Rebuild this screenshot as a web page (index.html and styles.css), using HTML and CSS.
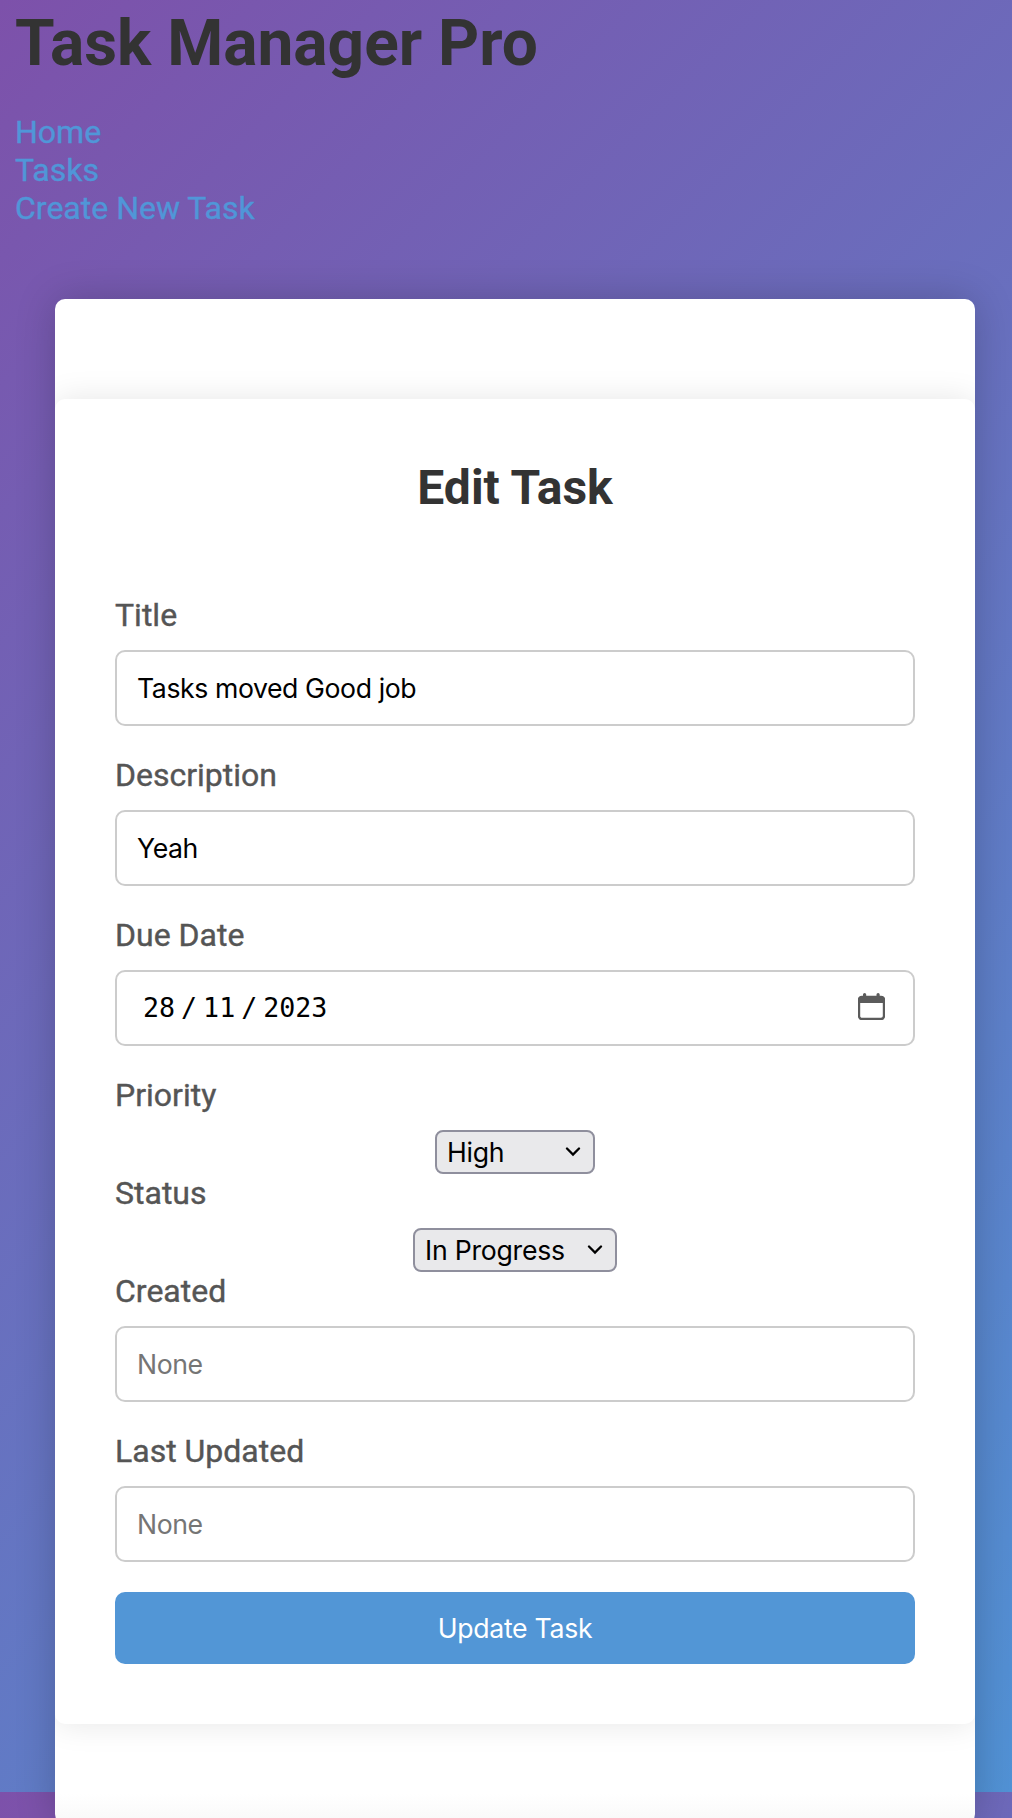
FILE: index.html
```html
<!DOCTYPE html>
<html lang="en">
<head>
<meta charset="utf-8">
<title>Task Manager Pro</title>
<link rel="stylesheet" href="styles.css">
</head>
<body>
<header class="site-header">
  <h1 class="brand">Task Manager Pro</h1>
  <nav class="nav">
    <a href="#">Home</a>
    <a href="#">Tasks</a>
    <a href="#">Create New Task</a>
  </nav>
</header>
<main class="container">
  <form class="task-form">
    <h2 class="form-title">Edit Task</h2>
    <label class="label" for="title">Title</label>
    <input class="field" id="title" type="text" value="Tasks moved Good job">
    <label class="label" for="description">Description</label>
    <input class="field" id="description" type="text" value="Yeah">
    <label class="label">Due Date</label>
    <div class="field date-field">
      <span class="date"><span>28</span><span class="slash">/</span><span>11</span><span class="slash">/</span><span>2023</span></span>
      <svg class="calendar" viewBox="0 0 27 27" width="27" height="27">
        <rect x="1" y="4" width="25" height="22" rx="3" fill="none" stroke="#5b5b5b" stroke-width="2.400"/>
        <path d="M0 10V7q0-4 4-4h1V1.500q0-1.500 1.600-1.500T8.200 1.500V3H18.500V1.500Q18.500 0 20.100 0T21.700 1.500V3H23q4 0 4 4v3z" fill="#5b5b5b"/>
      </svg>
    </div>
    <label class="label">Priority</label>
    <div class="select select-priority"><span>High</span><svg class="chevron" viewBox="0 0 16 10" width="16" height="10"><path d="M2 1.500L8 7.500L14 1.500" fill="none" stroke="#000" stroke-width="2.300" stroke-linecap="round"/></svg></div>
    <label class="label">Status</label>
    <div class="select select-status"><span>In Progress</span><svg class="chevron" viewBox="0 0 16 10" width="16" height="10"><path d="M2 1.500L8 7.500L14 1.500" fill="none" stroke="#000" stroke-width="2.300" stroke-linecap="round"/></svg></div>
    <label class="label" for="created">Created</label>
    <input class="field" id="created" type="text" placeholder="None">
    <label class="label" for="updated">Last Updated</label>
    <input class="field" id="updated" type="text" placeholder="None">
    <button class="submit" type="button">Update Task</button>
  </form>
</main>
</body>
</html>
```
FILE: styles.css
```css
* {
  box-sizing: border-box;
}

html {
  height: 1792px;
  overflow: hidden;
}

body {
  margin: 0;
  font: 32px/38px Roboto, sans-serif;
  background: linear-gradient(135deg, #7d51aa, #5192d5);
}

.site-header {
  height: 299px;
  padding: 6px 15px 0;
}

.brand {
  margin: 0 0 31px;
  font-size: 64px;
  line-height: 75px;
  font-weight: 700;
  color: #333;
}

.nav {
  display: flex;
  flex-direction: column;
  align-items: flex-start;
  padding-top: 1px;
}

.nav a {
  color: #5096d8;
  text-decoration: none;
  -webkit-text-stroke: 0.4px currentColor;
}

.container {
  width: 920px;
  height: 1525px;
  margin-left: 55px;
  padding: 100px 0;
  background: linear-gradient(to top, #f8f8f8, #fff 30px);
  border-radius: 10px;
  box-shadow: 0 0 40px rgba(0, 0, 0, 0.2);
}

.task-form {
  display: flex;
  flex-direction: column;
  align-items: center;
  height: 1325px;
  padding: 61px 60px 60px;
  background: #fff;
  border-radius: 10px;
  box-shadow: 0 0 32px rgba(0, 0, 0, 0.1);
  clip-path: inset(-40px 0);
}

.form-title {
  margin: 0 0 80px;
  font-size: 48px;
  line-height: 56px;
  color: #333;
}

.label {
  align-self: flex-start;
  height: 38px;
  margin-bottom: 16px;
  color: #555;
  -webkit-text-stroke: 0.4px currentColor;
}

.field {
  width: 800px;
  height: 76px;
  margin: 0 0 30px;
  padding: 0 20px;
  background: #fff;
  border: 2px solid #ccc;
  border-radius: 10px;
  font: 26.67px/32px Inter, sans-serif;
  letter-spacing: -0.42px;
  color: #000;
}

.field::placeholder {
  color: #757575;
  opacity: 1;
}

.date-field {
  display: flex;
  align-items: center;
  justify-content: space-between;
  padding: 0 28px 2px 26px;
  letter-spacing: 0;
}

.date {
  display: flex;
  gap: 6px;
  padding-top: 1px;
  font-family: "DejaVu Sans Mono", monospace;
}

.slash {
  width: 16px;
  text-align: center;
}

.calendar,
.chevron {
  display: block;
}

.calendar {
  margin-top: -1px;
}

.select {
  display: flex;
  align-items: center;
  justify-content: space-between;
  height: 44px;
  padding: 0 12px 0 10px;
  background: #e9e9eb;
  border: 2px solid #8f8f9d;
  border-radius: 8px;
  font: 26.67px/32px Inter, sans-serif;
  letter-spacing: -0.25px;
  color: #000;
}

.select-priority {
  width: 160px;
}

.select-status {
  width: 204px;
}

.submit {
  width: 800px;
  height: 72px;
  padding: 0;
  border: 0;
  border-radius: 10px;
  background: #5296d6;
  font: 26.67px/32px Inter, sans-serif;
  letter-spacing: -0.3px;
  color: #fff;
}
```
